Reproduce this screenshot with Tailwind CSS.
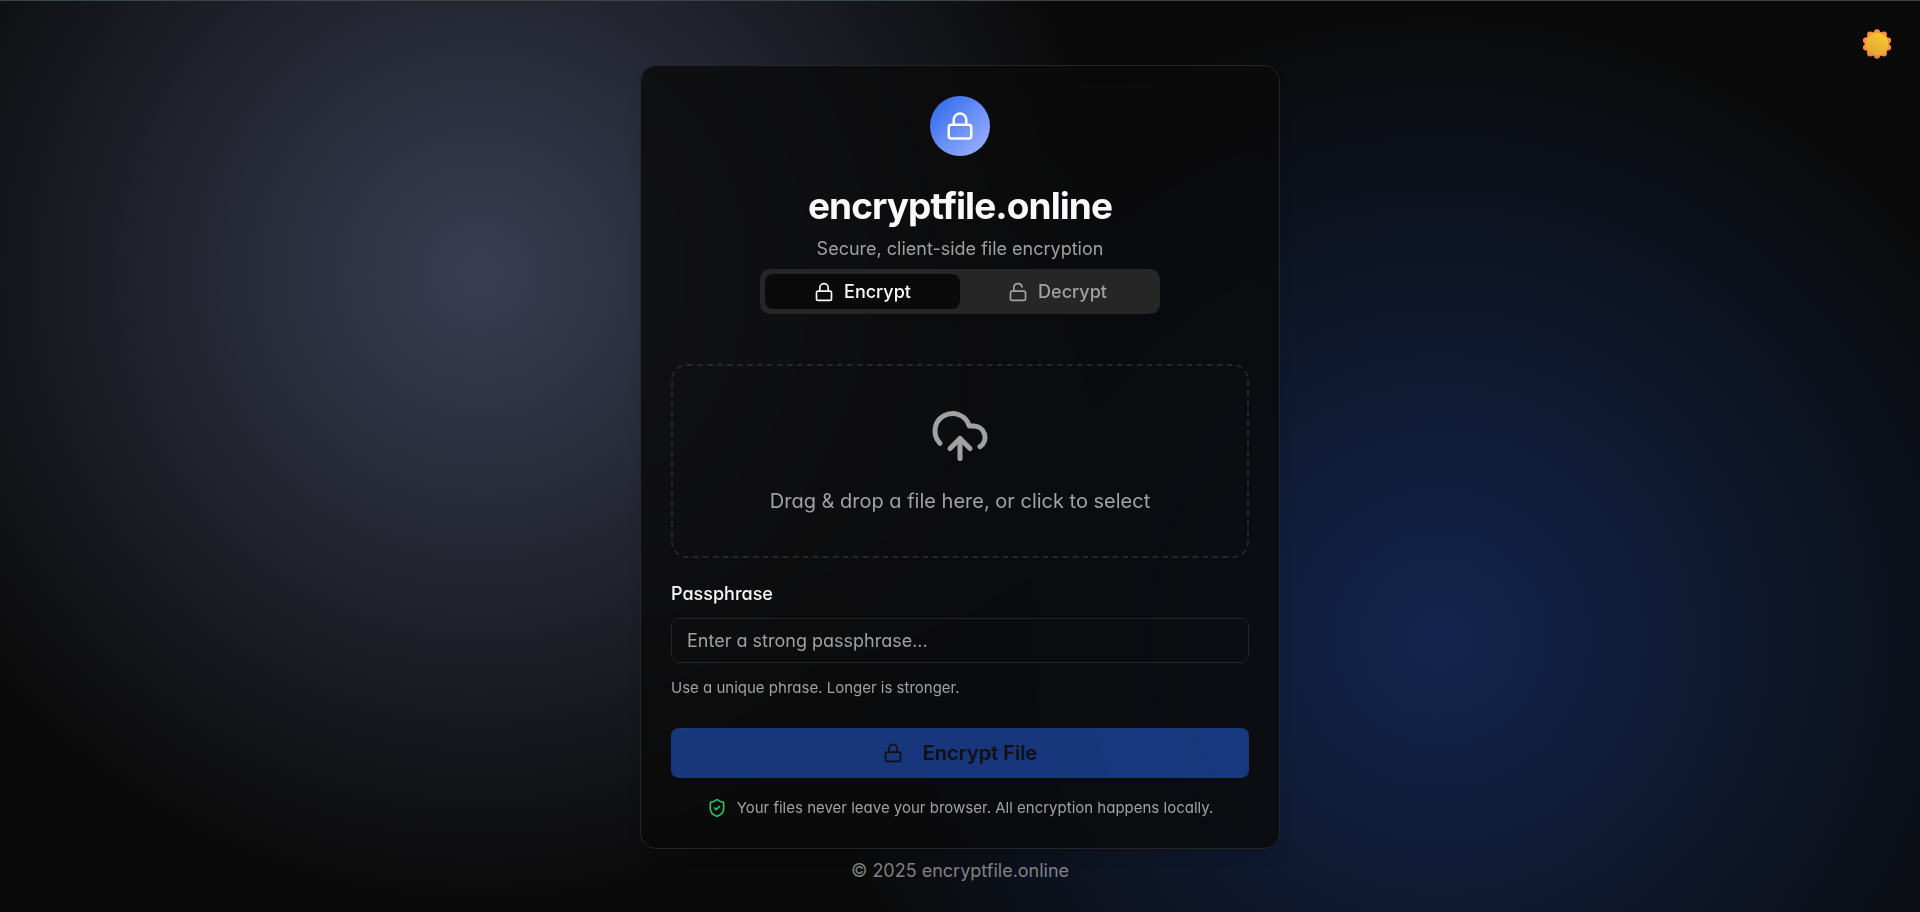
<!DOCTYPE html>
<html lang="en">

<head>
    <meta charset="UTF-8">
    <meta name="viewport" content="width=device-width, initial-scale=1.0">
    <title>encryptfile.online - Secure, client-side file encryption</title>
    <script src="https://cdn.jsdelivr.net/npm/@tailwindcss/browser@4"></script>
    <style>
        body {
            font-family: 'Inter', 'Liberation Sans', sans-serif;
            font-feature-settings: 'cv11';
            background-image:
                radial-gradient(circle at 25% 30%, rgba(165, 180, 252, 0.3), transparent 40%),
                radial-gradient(circle at 75% 70%, rgba(37, 99, 235, 0.3), transparent 40%);
        }
    </style>
</head>

<body class="relative min-h-screen flex flex-col items-center bg-[#0a0a0a] text-neutral-50 border-t border-[#3b4746] px-4 pt-16 pb-7 antialiased">
    <!-- Theme toggle -->
    <button id="themeBtn" type="button" aria-label="Toggle theme"
        class="absolute top-5 right-5 size-[46px] flex items-center justify-center rounded-lg cursor-pointer">
        <svg class="size-[30px]" viewBox="0 0 30 30">
            <defs>
                <linearGradient id="rays" x1="0" y1="0" x2="0" y2="1">
                    <stop offset="0" stop-color="#ff9a3c" />
                    <stop offset="1" stop-color="#f97d3c" />
                </linearGradient>
                <linearGradient id="core" x1="0.8" y1="0.1" x2="0.3" y2="1">
                    <stop offset="0" stop-color="#fcc72f" />
                    <stop offset="1" stop-color="#dda637" />
                </linearGradient>
            </defs>
            <g fill="url(#rays)">
                <circle cx="15" cy="15" r="12.4" />
                <circle cx="15" cy="3.3" r="3" />
                <circle cx="21.9" cy="5.5" r="3" />
                <circle cx="26.1" cy="11.4" r="3" />
                <circle cx="26.1" cy="18.6" r="3" />
                <circle cx="21.9" cy="24.5" r="3" />
                <circle cx="15" cy="26.7" r="3" />
                <circle cx="8.1" cy="24.5" r="3" />
                <circle cx="3.9" cy="18.6" r="3" />
                <circle cx="3.9" cy="11.4" r="3" />
                <circle cx="8.1" cy="5.5" r="3" />
            </g>
            <circle cx="15" cy="15" r="11.3" fill="url(#core)" />
        </svg>
    </button>

    <!-- Card -->
    <main class="w-full max-w-[640px] rounded-2xl border border-neutral-800 bg-[#0a0a0a]/80 p-[30px] shadow-lg backdrop-blur-md">
        <header class="flex flex-col items-center text-center">
            <div class="size-[60px] rounded-full bg-linear-135 from-[#2563eb] to-[#a5b4fc] flex items-center justify-center">
                <svg class="size-[30px]" viewBox="0 0 24 24" fill="none" stroke="currentColor" stroke-width="2"
                    stroke-linecap="round" stroke-linejoin="round">
                    <rect width="18" height="11" x="3" y="11" rx="2" ry="2" />
                    <path d="M7 11V7a5 5 0 0 1 10 0v4" />
                </svg>
            </div>
            <h1 class="mt-7 text-[37px] leading-[44px] font-bold tracking-tight">encryptfile.online</h1>
            <p class="mt-2 text-[18px] leading-[25px] text-neutral-400">Secure, client-side file encryption</p>

            <div role="tablist" class="mt-2 w-full max-w-[400px] h-[45px] grid grid-cols-2 rounded-[10px] bg-neutral-800 p-[5px] text-[18px] leading-[25px] font-medium text-neutral-400">
                <button id="encryptTab" type="button" role="tab" aria-selected="true"
                    class="flex items-center justify-center gap-2.5 rounded-lg cursor-pointer aria-selected:bg-[#0a0a0a] aria-selected:text-neutral-50">
                    <svg class="size-5" viewBox="0 0 24 24" fill="none" stroke="currentColor" stroke-width="2"
                        stroke-linecap="round" stroke-linejoin="round">
                        <rect width="18" height="11" x="3" y="11" rx="2" ry="2" />
                        <path d="M7 11V7a5 5 0 0 1 10 0v4" />
                    </svg>
                    Encrypt
                </button>
                <button id="decryptTab" type="button" role="tab" aria-selected="false"
                    class="flex items-center justify-center gap-2.5 rounded-lg cursor-pointer aria-selected:bg-[#0a0a0a] aria-selected:text-neutral-50">
                    <svg class="size-5" viewBox="0 0 24 24" fill="none" stroke="currentColor" stroke-width="2"
                        stroke-linecap="round" stroke-linejoin="round">
                        <rect width="18" height="11" x="3" y="11" rx="2" ry="2" />
                        <path d="M7 11V7a5 5 0 0 1 9.9-1" />
                    </svg>
                    Decrypt
                </button>
            </div>
        </header>

        <form id="cryptForm" class="mt-[50px]">
            <!-- Drop zone -->
            <label for="fileInput"
                class="flex flex-col items-center rounded-2xl border-2 border-dashed border-neutral-800 p-10 text-neutral-400 cursor-pointer">
                <svg class="size-[60px]" viewBox="0 0 24 24" fill="none" stroke="currentColor" stroke-width="2"
                    stroke-linecap="round" stroke-linejoin="round">
                    <path d="M4 14.899A7 7 0 1 1 15.71 8h1.79a4.5 4.5 0 0 1 2.5 8.242" />
                    <path d="M12 13v8" />
                    <path d="m8 17 4-4 4 4" />
                </svg>
                <span id="fileName" class="mt-5 text-[20px] leading-[30px]">Drag &amp; drop a file here, or click to select</span>
                <input id="fileInput" type="file" class="sr-only">
            </label>

            <label for="passphrase" class="mt-6 block text-[18px] leading-6 font-medium">Passphrase</label>
            <input id="passphrase" type="password" placeholder="Enter a strong passphrase..."
                class="mt-3 block w-full h-[45px] rounded-lg border border-neutral-800 px-[15px] text-[18px] leading-[25px] placeholder:text-neutral-400 focus:outline-none focus:border-blue-600">
            <p class="mt-[15px] text-[15px] leading-5 text-neutral-400">Use a unique phrase. Longer is stronger.</p>

            <button id="submitBtn" type="submit" disabled
                class="mt-[30px] w-full h-[50px] flex items-center justify-center gap-5 rounded-lg bg-[#2563eb] text-[20px] font-semibold text-neutral-900 disabled:opacity-50">
                <svg class="size-5" viewBox="0 0 24 24" fill="none" stroke="currentColor" stroke-width="2"
                    stroke-linecap="round" stroke-linejoin="round">
                    <rect width="18" height="11" x="3" y="11" rx="2" ry="2" />
                    <path d="M7 11V7a5 5 0 0 1 10 0v4" />
                </svg>
                <span id="submitText">Encrypt File</span>
            </button>
        </form>

        <div class="mt-5 flex items-center justify-center gap-2.5 text-[15px] leading-5 text-neutral-400">
            <svg class="size-5 text-[#22c55e]" viewBox="0 0 24 24" fill="none" stroke="currentColor" stroke-width="2"
                stroke-linecap="round" stroke-linejoin="round">
                <path d="M20 13c0 5-3.5 7.5-7.66 8.95a1 1 0 0 1-.67-.01C7.5 20.5 4 18 4 13V6a1 1 0 0 1 1-1c2 0 4.5-1.2 6.24-2.72a1.17 1.17 0 0 1 1.52 0C14.51 3.81 17 5 19 5a1 1 0 0 1 1 1z" />
                <path d="m9 12 2 2 4-4" />
            </svg>
            <span>Your files never leave your browser. All encryption happens locally.</span>
        </div>
    </main>

    <!-- Footer -->
    <footer class="mt-2.5 text-[18px] leading-6 text-neutral-400/80">
        <p>© 2025 encryptfile.online</p>
    </footer>

    <script>
        document.addEventListener('DOMContentLoaded', () => {
            const encryptTab = document.getElementById('encryptTab');
            const decryptTab = document.getElementById('decryptTab');
            const fileInput = document.getElementById('fileInput');
            const passphrase = document.getElementById('passphrase');
            const submitBtn = document.getElementById('submitBtn');

            const setMode = (encrypt) => {
                encryptTab.setAttribute('aria-selected', encrypt);
                decryptTab.setAttribute('aria-selected', !encrypt);
                document.getElementById('submitText').textContent = encrypt ? 'Encrypt File' : 'Decrypt File';
            };

            const updateSubmit = () => {
                submitBtn.disabled = !fileInput.files.length || !passphrase.value;
            };

            encryptTab.addEventListener('click', () => setMode(true));
            decryptTab.addEventListener('click', () => setMode(false));
            passphrase.addEventListener('input', updateSubmit);
            fileInput.addEventListener('change', () => {
                if (fileInput.files.length) {
                    document.getElementById('fileName').textContent = fileInput.files[0].name;
                }
                updateSubmit();
            });
            document.getElementById('cryptForm').addEventListener('submit', (e) => e.preventDefault());
        });
    </script>
</body>

</html>
